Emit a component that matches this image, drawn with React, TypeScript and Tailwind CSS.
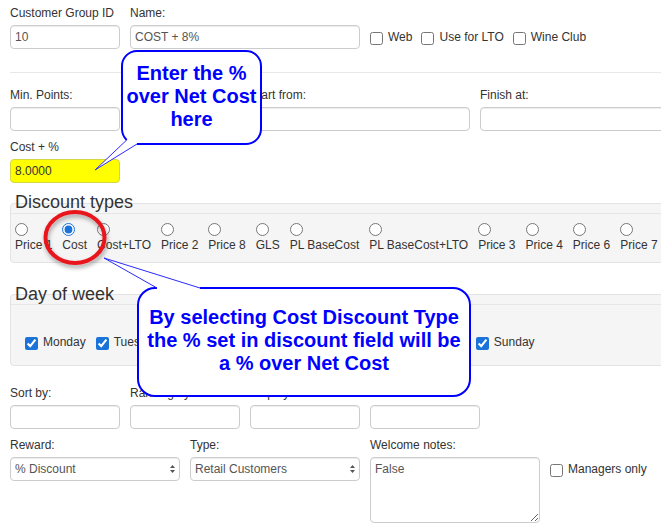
import type { ReactNode } from 'react';

const inputCls =
  'block h-[24px] w-full rounded-[4px] border border-[#ccc] bg-white px-[4px] text-[12px] text-[#555] shadow-[inset_0_1px_1px_rgba(0,0,0,0.075)] outline-none';

const DISCOUNT_TYPES = [
  'Price 1',
  'Cost',
  'Cost+LTO',
  'Price 2',
  'Price 8',
  'GLS',
  'PL BaseCost',
  'PL BaseCost+LTO',
  'Price 3',
  'Price 4',
  'Price 6',
  'Price 7',
];

const DAYS = ['Monday', 'Tuesday', 'Wednesday', 'Thursday', 'Friday', 'Saturday', 'Sunday'];

function Field({ label, width, children }: { label: string; width: string; children: ReactNode }) {
  return (
    <div className={`shrink-0 ${width}`}>
      <div className="mb-[5px] whitespace-nowrap">{label}</div>
      {children}
    </div>
  );
}

function Check({ label, checked = false }: { label: string; checked?: boolean }) {
  return (
    <label className="flex shrink-0 items-start gap-[5px] whitespace-nowrap">
      <input
        type="checkbox"
        defaultChecked={checked}
        className="m-0 mt-[2px] h-[13px] w-[13px] accent-[#1a73d9]"
      />
      <span>{label}</span>
    </label>
  );
}

function SelectBox({ value, options }: { value: string; options: string[] }) {
  return (
    <div className="relative">
      <select defaultValue={value} className={`${inputCls} appearance-none pr-[16px]`}>
        {options.map((o) => (
          <option key={o}>{o}</option>
        ))}
      </select>
      <svg
        className="pointer-events-none absolute right-[5px] top-[8px]"
        width="5"
        height="8"
        viewBox="0 0 5 8"
      >
        <path d="M2.5 0 L5 3 H0 Z M0 5 H5 L2.5 8 Z" fill="#555" />
      </svg>
    </div>
  );
}

function Callouts() {
  return (
    <div className="pointer-events-none absolute inset-0">
      <svg width="661" height="532" className="absolute left-0 top-0">
        <defs>
          <filter id="ring-shadow" x="-30%" y="-30%" width="160%" height="170%">
            <feDropShadow dx="1" dy="3" stdDeviation="2" floodColor="#000" floodOpacity="0.35" />
          </filter>
        </defs>

        {/* bubble over the cost field */}
        <path
          d="M137,144 H246 A15,15 0 0 0 261,129 V66 A15,15 0 0 0 246,51 H137 A15,15 0 0 0 122,66 V129 A15,15 0 0 0 126.7,140 L95,170 Z"
          fill="#fff"
        />
        <path
          d="M137,144 H246 A15,15 0 0 0 261,129 V66 A15,15 0 0 0 246,51 H137 A15,15 0 0 0 122,66 V129 A15,15 0 0 0 126.7,140"
          fill="none"
          stroke="#0000ff"
          strokeWidth="2"
        />
        <path d="M126.7,140 L95,170 L137,144" fill="none" stroke="#2a2aff" strokeWidth="1" />

        {/* bubble about the discount type */}
        <path
          d="M200,288 H453 A17,17 0 0 1 470,305 V379 A17,17 0 0 1 453,396 H155 A17,17 0 0 1 138,379 V305 A17,17 0 0 1 155,288 H157 L104,258 Z"
          fill="#fff"
        />
        <path
          d="M200,288 H453 A17,17 0 0 1 470,305 V379 A17,17 0 0 1 453,396 H155 A17,17 0 0 1 138,379 V305 A17,17 0 0 1 155,288 H157"
          fill="none"
          stroke="#0000ff"
          strokeWidth="2"
        />
        <path d="M157,288 L104,258 L200,288" fill="none" stroke="#2a2aff" strokeWidth="1" />

        <ellipse
          cx="75"
          cy="237.5"
          rx="29.5"
          ry="25.5"
          fill="none"
          stroke="#e8141b"
          strokeWidth="4"
          filter="url(#ring-shadow)"
        />
      </svg>

      <div className="absolute left-[122px] top-[62px] w-[139px] text-center text-[20px] font-bold leading-[23px] text-[#0000ff]">
        Enter the %<br />
        over Net Cost<br />
        here
      </div>
      <div className="absolute left-[138px] top-[306px] w-[332px] text-center text-[20px] font-bold leading-[23px] text-[#0000ff]">
        By selecting Cost Discount Type<br />
        the % set in discount field will be<br />
        a % over Net Cost
      </div>
    </div>
  );
}

export default function App() {
  return (
    <div className="relative h-[532px] w-[661px] overflow-hidden bg-white font-['Liberation_Sans',Arial,sans-serif] text-[12px] leading-[14px] text-[#333]">
      <div className="w-[710px] pl-[10px] pt-[6px]">
        {/* group header */}
        <div className="flex items-start gap-[10px]">
          <Field label="Customer Group ID" width="w-[110px]">
            <input readOnly value="10" className={`${inputCls} bg-[#eee]`} />
          </Field>
          <Field label="Name:" width="w-[230px]">
            <input defaultValue="COST + 8%" className={inputCls} />
          </Field>
          <div className="mt-[19px] flex items-start gap-[9px] pt-[5px]">
            <Check label="Web" />
            <Check label="Use for LTO" />
            <Check label="Wine Club" />
          </div>
        </div>

        <hr className="mt-[23px] border-[#e8e8e8]" />

        <div className="mt-[15px] flex gap-[10px]">
          <Field label="Min. Points:" width="w-[110px]">
            <input className={inputCls} />
          </Field>
          <Field label="Max. Points:" width="w-[110px]">
            <input className={inputCls} />
          </Field>
          <Field label="Start from:" width="w-[220px]">
            <input className={inputCls} />
          </Field>
          <Field label="Finish at:" width="w-[220px]">
            <input className={inputCls} />
          </Field>
        </div>

        <div className="mt-[9px] flex">
          <Field label="Cost + %" width="w-[110px]">
            <input
              defaultValue="8.0000"
              className="block h-[24px] w-full rounded-[4px] border border-[#d6d640] bg-[#ffff00] px-[4px] text-[12px] text-[#333] outline-none"
            />
          </Field>
        </div>

        {/* discount types */}
        <div className="ml-[5px] mt-[8px] text-[18px] leading-[22px]">Discount types</div>
        <div className="-mt-[10px] rounded-[4px] border border-[#e3e3e3] bg-[#f5f5f5] pt-[9px]">
          <div className="flex gap-x-[10px] border-t border-[#e6e6e6] pb-[10px] pl-[4px] pt-[9px]">
            {DISCOUNT_TYPES.map((t) => (
              <label key={t} className="flex shrink-0 flex-col items-start">
                <input
                  type="radio"
                  name="discount-type"
                  defaultChecked={t === 'Cost'}
                  className="m-0 h-[13px] w-[13px] accent-[#1a73d9]"
                />
                <span className="mt-[2px] whitespace-nowrap">{t}</span>
              </label>
            ))}
          </div>
        </div>

        {/* days */}
        <div className="ml-[5px] mt-[20px] text-[18px] leading-[22px]">Day of week</div>
        <div className="-mt-[11px] rounded-[4px] border border-[#e3e3e3] bg-[#f5f5f5] pt-[9px]">
          <div className="flex gap-x-[10px] border-t border-[#e6e6e6] pb-[15px] pl-[14px] pt-[30px]">
            {DAYS.map((d) => (
              <Check key={d} label={d} checked />
            ))}
          </div>
        </div>

        <div className="mt-[20px] flex gap-[10px]">
          <Field label="Sort by:" width="w-[110px]">
            <input className={inputCls} />
          </Field>
          <Field label="Ranking by:" width="w-[110px]">
            <input className={inputCls} />
          </Field>
          <Field label="Display:" width="w-[110px]">
            <input className={inputCls} />
          </Field>
          <Field label="Limit:" width="w-[110px]">
            <input className={inputCls} />
          </Field>
        </div>

        <div className="mt-[9px] flex items-start gap-[10px]">
          <Field label="Reward:" width="w-[170px]">
            <SelectBox value="% Discount" options={['% Discount', 'Points', 'Fixed amount']} />
          </Field>
          <Field label="Type:" width="w-[170px]">
            <SelectBox value="Retail Customers" options={['Retail Customers', 'Wholesale Customers']} />
          </Field>
          <Field label="Welcome notes:" width="w-[170px]">
            <textarea
              defaultValue="False"
              className="block h-[66px] w-full rounded-[4px] border border-[#ccc] bg-white px-[4px] pt-[4px] text-[12px] leading-[14px] text-[#555] shadow-[inset_0_1px_1px_rgba(0,0,0,0.075)] outline-none"
            />
          </Field>
          <div className="mt-[19px] pt-[5px]">
            <Check label="Managers only" />
          </div>
        </div>
      </div>

      <Callouts />
    </div>
  );
}
